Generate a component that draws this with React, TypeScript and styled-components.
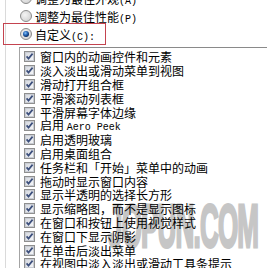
import React from "react";
import styled, { createGlobalStyle } from "styled-components";

const GlobalStyle = createGlobalStyle`
  html, body { margin: 0; padding: 0; background: #fff; overflow: hidden; }
  #root { width: 267px; height: 268px; }
`;

const Page = styled.div`
  position: relative;
  width: 267px;
  height: 268px;
  overflow: hidden;
  background: linear-gradient(to right, #fff 5px, #dadada 5px, #dadada 6px, #fff 6px);
  font-family: "Noto Sans CJK SC", "Noto Sans", sans-serif;
  font-size: 12px;
  color: #000;
`;

const RadioGroup = styled.div`
  display: flex;
  flex-direction: column;
  margin-top: -11px;
`;

const RadioRow = styled.div<{ $focus?: boolean }>`
  display: flex;
  align-items: center;
  gap: 3px;
  height: 18px;
  width: 84px;
  margin-left: 5px;
  padding-left: 15px;
  white-space: nowrap;
  outline: ${(p) => (p.$focus ? "1px solid #c4434f" : "none")};
  outline-offset: 1px;
  position: relative;
  z-index: 1;
`;

const Latin = styled.span`
  font-family: "Liberation Mono", monospace;
  font-size: 10px;
`;

const ListBox = styled.div`
  position: relative;
  z-index: 1;
  display: flex;
  flex-direction: column;
  margin: 4px 0 0 19px;
  padding: 2px 0 0 4px;
  border-top: 1px solid #8a8a8a;
  border-left: 1px solid #a4a4a4;
`;

const Item = styled.div`
  display: flex;
  align-items: center;
  gap: 5px;
  height: 13.8px;
  white-space: nowrap;
  line-height: 13px;
`;

const Watermark = styled.div`
  position: absolute;
  left: 108px;
  top: 195px;
  font-family: "Liberation Sans", Arial, sans-serif;
  font-weight: 700;
  font-size: 62px;
  line-height: 1;
  letter-spacing: -2px;
  color: #c6c6c6;
  -webkit-text-stroke: 3px #c6c6c6;
  transform: scaleX(0.42);
  transform-origin: left top;
  white-space: nowrap;
  pointer-events: none;
  z-index: 0;
`;

const Checkbox = () => (
  <svg width="11" height="11" viewBox="0 0 11 11" style={{ flex: "none" }}>
    <defs>
      <linearGradient id="cbg" x1="0" y1="0" x2="1" y2="1">
        <stop offset="0" stopColor="#d6d9df" />
        <stop offset="1" stopColor="#f6f7f9" />
      </linearGradient>
    </defs>
    <rect x="0.5" y="0.5" width="10" height="10" fill="#fff" stroke="#8f8f8f" />
    <rect x="1.5" y="1.5" width="8" height="8" fill="url(#cbg)" stroke="#c9cdd4" />
    <path d="M2.6 5.4 L4.5 7.6 L8.6 2.6" fill="none" stroke="#3c4f7c" strokeWidth="1.7" />
  </svg>
);

const Radio = ({ checked }: { checked?: boolean }) => (
  <svg width="12" height="12" viewBox="0 0 12 12" style={{ flex: "none" }}>
    <defs>
      <radialGradient id="rbg" cx="0.4" cy="0.4" r="0.7">
        <stop offset="0" stopColor="#f4f4f4" />
        <stop offset="1" stopColor="#cfcfcf" />
      </radialGradient>
      <radialGradient id="rdot" cx="0.4" cy="0.35" r="0.6">
        <stop offset="0" stopColor="#8fc3f5" />
        <stop offset="0.5" stopColor="#2c6fc0" />
        <stop offset="1" stopColor="#0d3169" />
      </radialGradient>
    </defs>
    <circle cx="6" cy="6" r="5.5" fill="url(#rbg)" stroke="#8c8c8c" />
    {checked && <circle cx="6" cy="6" r="3" fill="url(#rdot)" />}
  </svg>
);

const items: React.ReactNode[] = [
  "窗口内的动画控件和元素",
  "淡入淡出或滑动菜单到视图",
  "滑动打开组合框",
  "平滑滚动列表框",
  "平滑屏幕字体边缘",
  <>启用 <Latin>Aero Peek</Latin></>,
  "启用透明玻璃",
  "启用桌面组合",
  "任务栏和「开始」菜单中的动画",
  "拖动时显示窗口内容",
  "显示半透明的选择长方形",
  "显示缩略图，而不是显示图标",
  "在窗口和按钮上使用视觉样式",
  "在窗口下显示阴影",
  "在单击后淡出菜单",
  "在视图中淡入淡出或滑动工具条提示",
];

export default function App() {
  return (
    <Page>
      <GlobalStyle />
      <Watermark>JOPUN.COM</Watermark>
      <RadioGroup>
        <RadioRow>
          <Radio />
          <span>调整为最佳外观<Latin>(A)</Latin></span>
        </RadioRow>
        <RadioRow>
          <Radio />
          <span>调整为最佳性能<Latin>(P)</Latin></span>
        </RadioRow>
        <RadioRow $focus>
          <Radio checked />
          <span>自定义<Latin>(C):</Latin></span>
        </RadioRow>
      </RadioGroup>
      <ListBox>
        {items.map((t, i) => (
          <Item key={i}>
            <Checkbox />
            <span>{t}</span>
          </Item>
        ))}
      </ListBox>
    </Page>
  );
}
